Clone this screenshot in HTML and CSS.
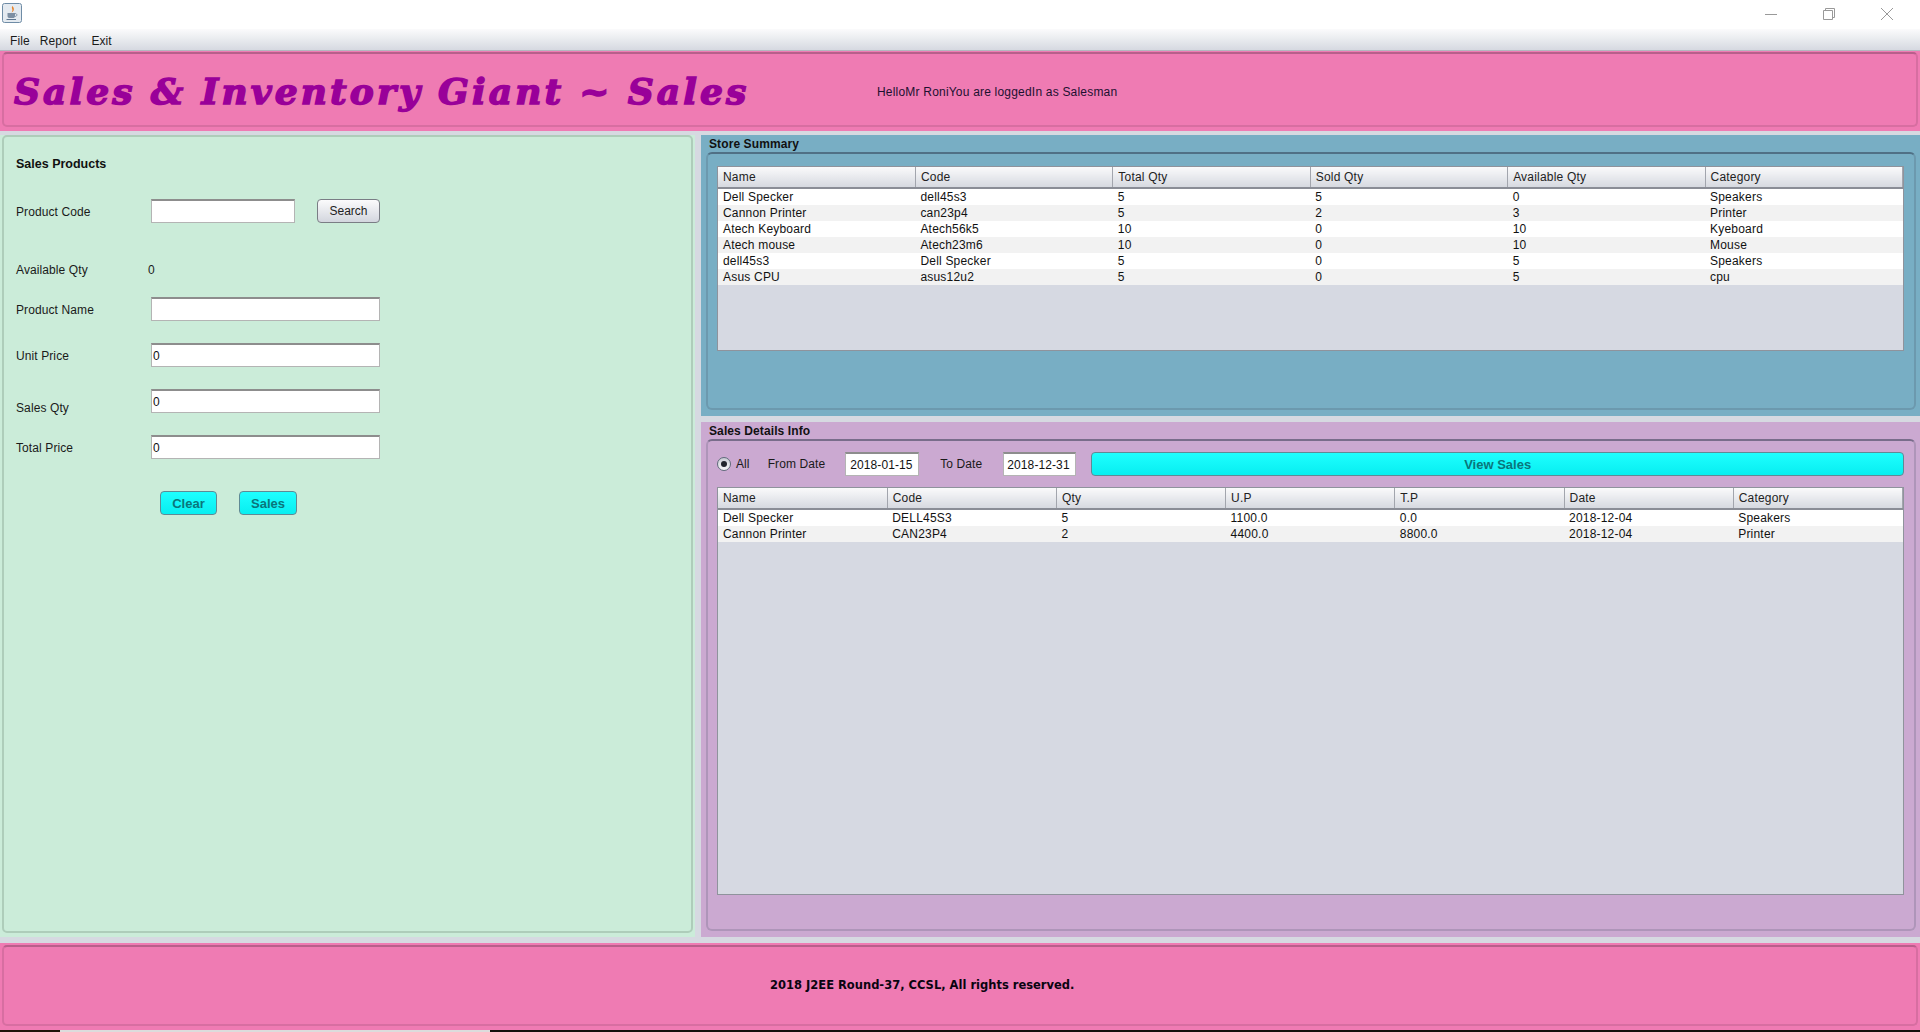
FILE: index.html
```html
<!DOCTYPE html>
<html lang="en">
<head>
    <meta charset="UTF-8">
    <title>Sales &amp; Inventory Giant ~ Sales</title>
    <link rel="stylesheet" href="styles.css">
</head>
<body>
    <div class="titlebar">
        <svg class="app-icon" width="20" height="20" viewBox="0 0 20 20">
            <rect x="0.5" y="0.5" width="19" height="19" rx="2" fill="#e4eaf0" stroke="#6f8ca6"/>
            <path d="M10.5 3 C8.5 5.5 12 6.5 9.5 9.5 C12.5 8 12.5 5.5 10.5 3Z" fill="#e8842c"/>
            <path d="M5.5 10 H13 V13 C13 14.5 12 15 11 15 H7.5 C6.5 15 5.5 14.5 5.5 13Z" fill="#7d8fa3"/>
            <path d="M13 10.5 C15.5 10.5 15.5 13.5 12.8 13.5" fill="none" stroke="#7d8fa3"/>
            <path d="M4.5 16.5 H14" stroke="#5f7790" stroke-width="1"/>
        </svg>
        <div class="window-controls">
            <svg width="14" height="14" viewBox="0 0 14 14"><path d="M1 7.5 H13" stroke="#999" stroke-width="1"/></svg>
            <svg width="14" height="14" viewBox="0 0 14 14"><path d="M1.5 3.5 H10.5 V12.5 H1.5Z M3.5 3.5 V1.5 H12.5 V10.5 H10.5" fill="none" stroke="#999" stroke-width="1"/></svg>
            <svg width="14" height="14" viewBox="0 0 14 14"><path d="M1 1 L13 13 M13 1 L1 13" stroke="#999" stroke-width="1"/></svg>
        </div>
    </div>
    <div class="menubar">
        <span class="menu-file">File</span>
        <span class="menu-report">Report</span>
        <span class="menu-exit">Exit</span>
    </div>

    <header class="banner">
        <div class="banner-inner">
            <h1 class="app-title">Sales &amp; Inventory Giant ~ Sales</h1>
            <span class="greeting">HelloMr RoniYou are loggedIn as Salesman</span>
        </div>
    </header>

    <main class="main">
        <section class="sales-form">
            <div class="sales-form-inner">
                <h2 class="form-title">Sales Products</h2>
                <div class="row row-code">
                    <label>Product Code</label>
                    <input class="field field-code" type="text">
                    <button class="btn-plain">Search</button>
                </div>
                <div class="row row-avail">
                    <label>Available Qty</label>
                    <span class="avail-value">0</span>
                </div>
                <div class="row row-name">
                    <label>Product Name</label>
                    <input class="field" type="text">
                </div>
                <div class="row row-next">
                    <label>Unit Price</label>
                    <input class="field" type="text" value="0">
                </div>
                <div class="row row-next">
                    <label class="label-low">Sales Qty</label>
                    <input class="field" type="text" value="0">
                </div>
                <div class="row row-next">
                    <label>Total Price</label>
                    <input class="field" type="text" value="0">
                </div>
                <div class="row row-actions">
                    <button class="btn-cyan btn-clear">Clear</button>
                    <button class="btn-cyan btn-sales">Sales</button>
                </div>
            </div>
        </section>

        <div class="right-col">
            <section class="group group-store">
                <div class="legend">Store Summary</div>
                <div class="group-inner">
                    <div class="table-box table-box-store">
                        <table>
                            <thead>
                                <tr><th>Name</th><th>Code</th><th>Total Qty</th><th>Sold Qty</th><th>Available Qty</th><th>Category</th></tr>
                            </thead>
                            <tbody>
                                <tr><td>Dell Specker</td><td>dell45s3</td><td>5</td><td>5</td><td>0</td><td>Speakers</td></tr>
                                <tr><td>Cannon Printer</td><td>can23p4</td><td>5</td><td>2</td><td>3</td><td>Printer</td></tr>
                                <tr><td>Atech Keyboard</td><td>Atech56k5</td><td>10</td><td>0</td><td>10</td><td>Kyeboard</td></tr>
                                <tr><td>Atech mouse</td><td>Atech23m6</td><td>10</td><td>0</td><td>10</td><td>Mouse</td></tr>
                                <tr><td>dell45s3</td><td>Dell Specker</td><td>5</td><td>0</td><td>5</td><td>Speakers</td></tr>
                                <tr><td>Asus CPU</td><td>asus12u2</td><td>5</td><td>0</td><td>5</td><td>cpu</td></tr>
                            </tbody>
                        </table>
                    </div>
                </div>
            </section>

            <section class="group group-details">
                <div class="legend">Sales Details Info</div>
                <div class="group-inner group-inner-details">
                    <div class="filter-row">
                        <span class="radio"><span class="radio-dot"></span></span>
                        <span class="filter-all">All</span>
                        <span class="filter-from">From Date</span>
                        <input class="field date-from" type="text" value="2018-01-15">
                        <span class="filter-to">To Date</span>
                        <input class="field date-to" type="text" value="2018-12-31">
                        <button class="btn-cyan btn-view">View Sales</button>
                    </div>
                    <div class="table-box table-box-details">
                        <table>
                            <thead>
                                <tr><th>Name</th><th>Code</th><th>Qty</th><th>U.P</th><th>T.P</th><th>Date</th><th>Category</th></tr>
                            </thead>
                            <tbody>
                                <tr><td>Dell Specker</td><td>DELL45S3</td><td>5</td><td>1100.0</td><td>0.0</td><td>2018-12-04</td><td>Speakers</td></tr>
                                <tr><td>Cannon Printer</td><td>CAN23P4</td><td>2</td><td>4400.0</td><td>8800.0</td><td>2018-12-04</td><td>Printer</td></tr>
                            </tbody>
                        </table>
                    </div>
                </div>
            </section>
        </div>
    </main>

    <footer class="banner banner-footer">
        <div class="banner-inner">
            <span class="copyright">2018 J2EE Round-37, CCSL, All rights reserved.</span>
        </div>
    </footer>

    <div class="taskbar-strip">
        <span class="strip-dark-a"></span>
        <span class="strip-light"></span>
        <span class="strip-dark-b"></span>
    </div>
</body>
</html>
```

FILE: styles.css
```css
* {
    box-sizing: border-box;
}
body {
    margin: 0;
    height: 100vh;
    overflow: hidden;
    display: flex;
    flex-direction: column;
    background-color: #d6d9e1;
    font-family: "Liberation Sans", Arial, sans-serif;
    font-size: 12px;
    letter-spacing: 0.1px;
    color: #1a1a1a;
}

/* window chrome */
.titlebar {
    height: 29px;
    flex: none;
    background-color: #fff;
    display: flex;
    align-items: center;
    justify-content: space-between;
    padding-left: 2px;
}
.app-icon {
    margin-top: -4px;
}
.window-controls {
    display: flex;
    gap: 44px;
    margin-right: 26px;
    margin-top: -2px;
}
.menubar {
    height: 22px;
    flex: none;
    display: flex;
    align-items: center;
    padding-top: 2px;
    background: linear-gradient(#fbfbfc, #eceef1 40%, #d6d9e1);
    border-bottom: 1px solid #b4b7bf;
}
.menu-file {
    margin-left: 10px;
}
.menu-report {
    margin-left: 10px;
}
.menu-exit {
    margin-left: 15px;
}

/* pink header and footer */
.banner {
    height: 80px;
    flex: none;
    background-color: #ef7bb3;
    padding: 1px 2px 4px 2px;
}
.banner-inner {
    height: 100%;
    display: flex;
    align-items: center;
    padding-left: 10px;
    border: 2px solid #d76ea1;
    border-top-color: #b85f8b;
    border-radius: 5px;
}
.app-title {
    width: 863px;
    flex: none;
    margin: 3px 0 0 0;
    font-family: "DejaVu Serif", serif;
    font-size: 36px;
    font-weight: bold;
    font-style: italic;
    letter-spacing: 3.1px;
    word-spacing: -0.5px;
    color: #990099;
    -webkit-text-stroke: 1.5px #990099;
    white-space: nowrap;
}
.greeting {
    color: #1c1030;
    margin-top: 4px;
    letter-spacing: 0.2px;
}
.banner-footer {
    height: 87px;
    margin-top: 6px;
    padding: 2px 2px 4px 2px;
}
.banner-footer .banner-inner {
    padding-left: 766px;
}
.copyright {
    margin-top: -2px;
    font-family: "DejaVu Sans", sans-serif;
    font-size: 11.5px;
    font-weight: bold;
    letter-spacing: 0;
    color: #0a0410;
}

/* main area */
.main {
    flex: 1;
    display: flex;
    margin-top: 4px;
    min-height: 0;
}
.sales-form {
    width: 695px;
    flex: none;
    background-color: #cbecd9;
    padding: 0 2px 4px 2px;
}
.sales-form-inner {
    height: 100%;
    padding: 19px 0 0 12px;
    border: 2px solid #aecdba;
    border-radius: 5px;
}
.form-title {
    margin: 0;
    font-size: 12.5px;
    line-height: 16px;
    font-weight: bold;
    letter-spacing: 0;
    color: #111;
}
.row {
    display: flex;
    align-items: center;
    height: 24px;
}
.row label {
    width: 135px;
    flex: none;
    padding-top: 2px;
}
.row .label-low {
    padding-top: 14px;
}
.row-avail label {
    padding-top: 0;
}
.row-code {
    margin-top: 27px;
}
.row-avail {
    margin-top: 35px;
}
.row-name {
    margin-top: 15px;
}
.row-next {
    margin-top: 22px;
}
.row-actions {
    margin-top: 32px;
    padding-left: 144px;
}
.avail-value {
    margin-left: -3px;
}
.field {
    width: 229px;
    height: 24px;
    padding: 0 1px;
    border: 1px solid #b4b4b4;
    border-top: 2px solid #8d8d8d;
    background-color: #fff;
    font-family: inherit;
    font-size: 12px;
    letter-spacing: 0.1px;
    color: #111;
    outline: none;
}
.field-code {
    width: 144px;
}
.btn-plain {
    width: 63px;
    height: 24px;
    margin-left: 22px;
    padding: 0;
    border: 1px solid #7a7d85;
    border-radius: 4px;
    background: linear-gradient(#fbfbfc, #d3d6de);
    font-family: inherit;
    font-size: 12px;
    color: #222;
}
.btn-cyan {
    height: 24px;
    padding: 0;
    border: 1px solid #5f8a95;
    border-radius: 4px;
    background: linear-gradient(#1effff, #08eef0);
    font-family: inherit;
    font-size: 13px;
    font-weight: bold;
    letter-spacing: 0;
    color: #0a767b;
}
.btn-clear {
    width: 57px;
}
.btn-sales {
    width: 58px;
    margin-left: 22px;
}

/* right column */
.right-col {
    flex: 1;
    display: flex;
    flex-direction: column;
    gap: 6px;
    margin-left: 6px;
    min-width: 0;
}
.group {
    display: flex;
    flex-direction: column;
    padding: 0 4px 6px 5px;
}
.group-store {
    height: 281px;
    flex: none;
    background-color: #78aec4;
}
.group-details {
    flex: 1;
    min-height: 0;
    background-color: #cba9d1;
}
.legend {
    height: 17px;
    flex: none;
    padding-left: 3px;
    line-height: 18px;
    font-weight: bold;
    color: #111;
}
.group-inner {
    flex: 1;
    min-height: 0;
    display: flex;
    flex-direction: column;
    padding: 12px 10px 0 9px;
    border: 2px solid rgba(60, 70, 90, 0.2);
    border-top-color: rgba(40, 50, 70, 0.5);
    border-radius: 6px;
}
.group-inner-details {
    padding-top: 11px;
    padding-bottom: 34px;
}
.table-box {
    background-color: #d6d9e2;
    border: 1px solid #8f939c;
    overflow: hidden;
}
.table-box-store {
    height: 185px;
    flex: none;
}
.table-box-details {
    flex: 1;
    min-height: 0;
    margin-top: 11px;
}
table {
    width: 100%;
    table-layout: fixed;
    border-collapse: collapse;
}
th {
    height: 21px;
    padding: 0 0 0 5px;
    text-align: left;
    font-weight: normal;
    letter-spacing: 0.2px;
    color: #222;
    background: linear-gradient(#fafafb, #d6d9e0);
    border-right: 1px solid #a2a5ad;
    border-bottom: 2px solid #8a8d96;
}
td {
    height: 16px;
    padding: 0 0 0 5px;
    line-height: 16px;
    letter-spacing: 0.2px;
    color: #111;
    background-color: #fff;
    white-space: nowrap;
}
tbody tr:nth-child(even) td {
    background-color: #f2f2f2;
}

/* filter row above the sales table */
.filter-row {
    height: 24px;
    flex: none;
    display: flex;
    align-items: center;
}
.radio {
    width: 14px;
    height: 14px;
    display: flex;
    align-items: center;
    justify-content: center;
    border: 1px solid #5f6b7a;
    border-radius: 50%;
    background: linear-gradient(#c9ccd4, #f5f6f8);
}
.radio-dot {
    width: 6px;
    height: 6px;
    border-radius: 50%;
    background-color: #20242c;
}
.filter-all {
    margin-left: 5px;
}
.filter-from {
    margin-left: 18px;
}
.date-from {
    width: 74px;
    margin-left: 20px;
    padding: 0 3px 0 4px;
}
.filter-to {
    margin-left: 21px;
}
.date-to {
    width: 73px;
    margin-left: 21px;
    padding: 0 3px;
}
.btn-view {
    flex: 1;
    margin-left: 15px;
}

/* bit of the taskbar that shows under the window */
.taskbar-strip {
    height: 2px;
    flex: none;
    display: flex;
}
.strip-dark-a {
    width: 60px;
    background-color: #1f1408;
}
.strip-light {
    width: 430px;
    background-color: #dcdcdc;
}
.strip-dark-b {
    flex: 1;
    background-color: #14100c;
}
```
